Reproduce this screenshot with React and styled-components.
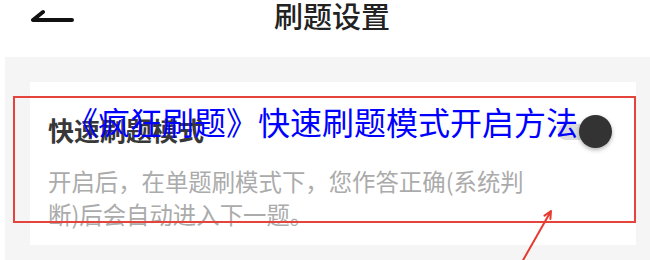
import React from 'react';
import styled, { createGlobalStyle } from 'styled-components';

const GlobalStyle = createGlobalStyle`
  body {
    margin: 0;
    background: #fff;
    font-family: "Noto Sans CJK SC", "Noto Sans", sans-serif;
  }
`;

const Page = styled.div`
  position: relative;
  width: 650px;
  height: 260px;
  overflow: hidden;
  display: flex;
  flex-direction: column;
`;

const Header = styled.header`
  height: 57px;
  flex-shrink: 0;
  padding-left: 14px;
  display: grid;
  grid-template-columns: 90px 1fr 90px;
  align-items: start;
  background: #fff;
`;

const BackButton = styled.div`
  padding: 8px 0 0 17px;
  display: flex;
  align-items: flex-start;
`;

const HeaderTitle = styled.h1`
  margin: 0;
  padding-top: 1px;
  font-size: 29px;
  line-height: 29px;
  font-weight: 500;
  color: #222;
  text-align: center;
`;

const Main = styled.main`
  flex: 1;
  margin-left: 5px;
  padding: 25px 14px 0 25px;
  background: #f5f5f5;
`;

const Card = styled.section`
  background: #fff;
  padding: 35px 24px 14px 18px;
  display: flex;
  justify-content: space-between;
  align-items: flex-start;
`;

const Info = styled.div`
  display: flex;
  flex-direction: column;
  gap: 22px;
`;

const OptionTitle = styled.div`
  font-size: 26px;
  line-height: 26px;
  font-weight: 600;
  color: #383838;
`;

const OptionDesc = styled.p`
  margin: 0;
  max-width: 495px;
  font-size: 23.4px;
  line-height: 33px;
  color: #ababab;
`;

const Switch = styled.div`
  position: relative;
  width: 54px;
  height: 32px;
  margin-top: -2px;
  flex-shrink: 0;
`;

const Track = styled.span`
  position: absolute;
  left: 0;
  top: 9px;
  width: 42px;
  height: 16px;
  border-radius: 8px;
  background: #dcdcdc;
`;

const Knob = styled.span`
  position: absolute;
  right: 0;
  top: 0;
  width: 33px;
  height: 33px;
  border-radius: 50%;
  background: #333;
  box-shadow: 0 2px 4px rgba(0, 0, 0, 0.3);
`;

const Caption = styled.div`
  position: absolute;
  left: 66px;
  top: 105px;
  font-size: 32px;
  line-height: 32px;
  color: #0000ff;
  white-space: nowrap;
`;

const Highlight = styled.div`
  position: absolute;
  left: 13px;
  top: 96px;
  width: 623px;
  height: 127px;
  box-sizing: border-box;
  border: 2px solid #e4443c;
  pointer-events: none;
`;

const Annotation = styled.svg`
  position: absolute;
  left: 0;
  top: 0;
  pointer-events: none;
`;

const BackIcon = () => (
  <svg width="44" height="16" viewBox="30 8 44 16">
    <path d="M42 12 L32 20 L71 20" fill="none" stroke="#111" strokeWidth="4" strokeLinecap="round" strokeLinejoin="round" />
  </svg>
);

export default function App() {
  return (
    <>
      <GlobalStyle />
      <Page>
        <Header>
          <BackButton>
            <BackIcon />
          </BackButton>
          <HeaderTitle>刷题设置</HeaderTitle>
          <div />
        </Header>
        <Main>
          <Card>
            <Info>
              <OptionTitle>快速刷题模式</OptionTitle>
              <OptionDesc>开启后，在单题刷模式下，您作答正确(系统判断)后会自动进入下一题。</OptionDesc>
            </Info>
            <Switch>
              <Track />
              <Knob />
            </Switch>
          </Card>
        </Main>

        <Highlight />
        <Annotation width="650" height="260">
          <path d="M522 262 L551 211 M544.5 215.6 L551 211 L550.4 219" fill="none" stroke="#e83a30" strokeWidth="2" strokeLinecap="round" strokeLinejoin="round" />
        </Annotation>
        <Caption>《疯狂刷题》快速刷题模式开启方法</Caption>
      </Page>
    </>
  );
}
